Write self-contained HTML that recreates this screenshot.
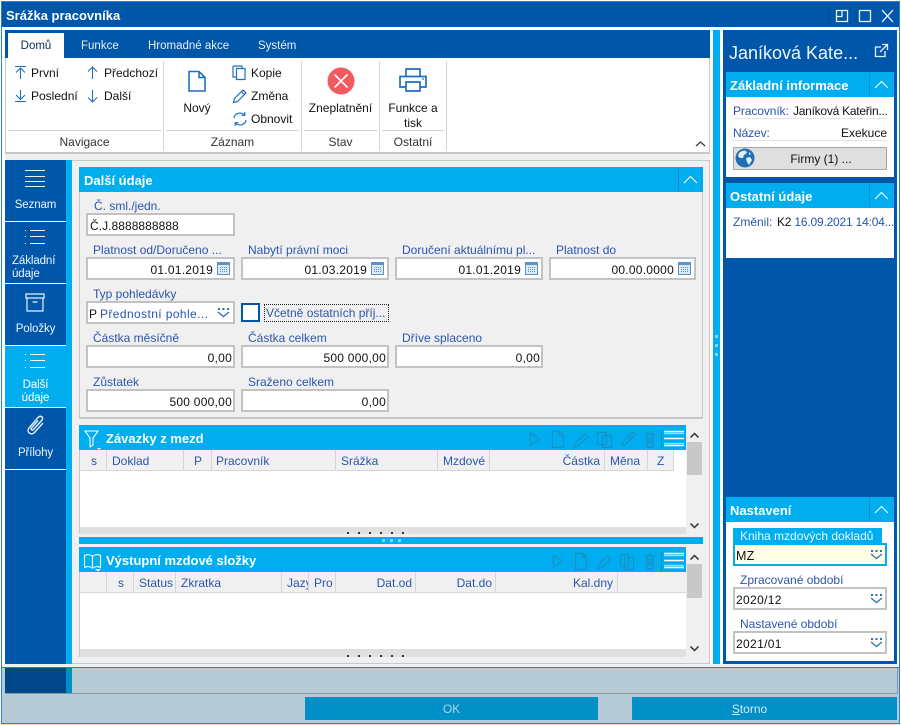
<!DOCTYPE html>
<html lang="cs"><head><meta charset="utf-8"><title>Srážka pracovníka</title>
<style>
html,body{margin:0;padding:0;background:#fff}
body{width:901px;height:725px;position:relative;overflow:hidden;font:12px/14px "Liberation Sans","DejaVu Sans",sans-serif;color:#111}
div,svg{position:absolute;box-sizing:border-box}
.t{white-space:nowrap}
.l{white-space:nowrap;color:#2b55ad}
.h{white-space:nowrap;color:#fff;font-weight:bold;font-size:13px;line-height:16px}
.c{text-align:center}
.r{text-align:right}
.b{background:#00aeef}
.in{background:#fff;border:2px solid #c2c2c2;height:23px}
.v{white-space:nowrap;letter-spacing:.25px}
.nav{color:#eef5ff;text-align:center;left:5px;width:61px;line-height:17px;font-size:11.5px;letter-spacing:-.1px}
.sep{background:#d4d4d4}
.col{background:#d6d6d6;width:1px}
svg{fill:none}
</style></head><body>
<!-- window -->
<div style="left:1px;top:1px;width:899px;height:723px;border:1px solid #2a7fd8;background:#f0f0f0"></div>
<div style="left:2px;top:2px;width:897px;height:25px;background:#0056a8"></div>
<div style="left:2px;top:27px;width:897px;height:637px;background:#fff"></div>
<div class="h" style="left:6px;top:8px">Srážka pracovníka</div>
<div style="left:829px;top:8px;width:1px;height:17px;background:#004a92"></div>
<svg style="left:835px;top:8px" width="64" height="16" stroke="#e8f0fa" stroke-width="1.3">
<path d="M1.500 2.500h11v11h-11zM7 2.500v6H1.500"/><path d="M24.500 2.500h11v11h-11z"/><path d="M47 2l11 12M58 2L47 14"/></svg>

<!-- ribbon -->
<div style="left:5px;top:30px;width:705px;height:124px;background:#fff;border:solid #c8c8c8;border-width:0 1px 2px 1px"></div>
<div style="left:5px;top:30px;width:705px;height:28px;background:#0056a8"></div>
<div style="left:8px;top:33px;width:56px;height:25px;background:#fff"></div>
<div class="t c" style="left:8px;top:39px;width:56px;font-size:11.500px;color:#0c2a55">Domů</div>
<div class="t" style="left:81px;top:39px;color:#e8f1fb;font-size:11.500px">Funkce</div>
<div class="t" style="left:148px;top:39px;color:#e8f1fb;font-size:11.500px">Hromadné akce</div>
<div class="t" style="left:258px;top:39px;color:#e8f1fb;font-size:11.500px">Systém</div>
<div class="sep" style="left:8px;top:130px;width:153px;height:1px"></div>
<div class="sep" style="left:166px;top:130px;width:133px;height:1px"></div>
<div class="sep" style="left:304px;top:130px;width:73px;height:1px"></div>
<div class="sep" style="left:382px;top:130px;width:62px;height:1px"></div>
<div class="sep" style="left:163px;top:61px;width:1px;height:90px"></div>
<div class="sep" style="left:301px;top:61px;width:1px;height:90px"></div>
<div class="sep" style="left:379px;top:61px;width:1px;height:90px"></div>
<div class="sep" style="left:446px;top:61px;width:1px;height:90px"></div>
<svg style="left:14px;top:65px" width="16" height="16" stroke="#1f6fc0" stroke-width="1.1"><path d="M1 1.500h11M6.500 14V3M2 7.500l4.500-4.500 4.500 4.500"/></svg>
<svg style="left:14px;top:88px" width="16" height="16" stroke="#1f6fc0" stroke-width="1.1"><path d="M1 13.500h11M6.500 2v9.500M2 7l4.500 4.500L11 7"/></svg>
<svg style="left:87px;top:65px" width="14" height="16" stroke="#1f6fc0" stroke-width="1.1"><path d="M5.500 14V2M1 6.500L5.500 2 10 6.500"/></svg>
<svg style="left:87px;top:88px" width="14" height="16" stroke="#1f6fc0" stroke-width="1.1"><path d="M5.500 2v12M1 9.500L5.500 14 10 9.500"/></svg>
<div class="t" style="left:31px;top:66px">První</div>
<div class="t" style="left:31px;top:89px">Poslední</div>
<div class="t" style="left:104px;top:66px">Předchozí</div>
<div class="t" style="left:104px;top:89px">Další</div>
<div class="t c" style="left:8px;top:135px;width:153px;color:#333">Navigace</div>
<svg style="left:187px;top:70px" width="20" height="22" stroke="#1f6fc0" stroke-width="1.600"><path d="M2 1.500h10l6 6v13.500H2zM12 1.500v6h6"/></svg>
<div class="t c" style="left:167px;top:101px;width:60px">Nový</div>
<svg style="left:232px;top:65px" width="16" height="16" stroke="#1f6fc0" stroke-width="1.2"><path d="M1 1h9v2M1 1v11h3M4.500 3.500h8.500v11H4.500z"/></svg>
<svg style="left:232px;top:88px" width="16" height="16" stroke="#1f6fc0" stroke-width="1.2"><path d="M1.500 14.500l1-4 8.500-8.500 3 3-8.500 8.500zM9.500 3.500l3 3"/></svg>
<svg style="left:232px;top:111px" width="16" height="16" stroke="#1f6fc0" stroke-width="1.2"><path d="M2 7a6 5.500 0 0 1 10.500-3M14 9a6 5.500 0 0 1-10.500 3M12.800 1v3.300H9.500M3.200 15v-3.300h3.300"/></svg>
<div class="t" style="left:251px;top:66px">Kopie</div>
<div class="t" style="left:251px;top:89px">Změna</div>
<div class="t" style="left:251px;top:112px">Obnovit</div>
<div class="t c" style="left:166px;top:135px;width:133px;color:#333">Záznam</div>
<svg style="left:327px;top:67px" width="28" height="28"><circle cx="14" cy="14" r="13.500" fill="#f15a5f"/><path d="M7.500 7.500l13 13M20.500 7.500l-13 13" stroke="#fff" stroke-width="1.600"/></svg>
<div class="t c" style="left:303px;top:101px;width:75px">Zneplatnění</div>
<div class="t c" style="left:303px;top:135px;width:75px;color:#333">Stav</div>
<svg style="left:399px;top:67px" width="28" height="26" stroke="#1f6fc0" stroke-width="1.700"><path d="M7 9V2h14v7M7 20H1V9.500h26V20h-6M7 15h14v9H7z"/><path d="M23 12h2" stroke-width="1.200"/></svg>
<div class="t c" style="left:381px;top:101px;width:64px;line-height:15px">Funkce a<br>tisk</div>
<div class="t c" style="left:381px;top:135px;width:64px;color:#333">Ostatní</div>
<svg style="left:695px;top:140px" width="11" height="8" stroke="#333" stroke-width="1.200"><path d="M1 6l4.500-4L10 6"/></svg>

<!-- main -->
<div style="left:5px;top:154px;width:705px;height:6px;background:#f0f0f0"></div>
<div style="left:72px;top:160px;width:638px;height:504px;background:#f0f0f0;border:solid #c8c8c8;border-width:1px 1px 1px 0"></div>
<div style="left:5px;top:160px;width:61px;height:504px;background:#0056a8"></div>
<div style="left:66px;top:160px;width:6px;height:504px;background:#00aeef"></div>
<div style="left:5px;top:346px;width:61px;height:61px;background:#00aeef"></div>
<div style="left:5px;top:221px;width:61px;height:1px;background:#fff"></div>
<div style="left:5px;top:283px;width:61px;height:1px;background:#fff"></div>
<div style="left:5px;top:345px;width:61px;height:1px;background:#fff"></div>
<div style="left:5px;top:407px;width:61px;height:1px;background:#fff"></div>
<div style="left:5px;top:469px;width:61px;height:1px;background:#fff"></div>
<svg style="left:24px;top:169px" width="22" height="18" stroke="#e8f1fb" stroke-width="1"><path d="M1 1.500h20M1 7.500h20M1 12.500h20M1 17.500h20"/></svg>
<div class="nav" style="top:197px">Seznam</div>
<svg style="left:24px;top:229px" width="22" height="16" stroke="#e8f1fb"><path d="M6 1.500h15M6 7.500h15M6 14.500h15"/><path d="M1 1.500h2M1 7.500h2M1 14.500h2" stroke-dasharray="1 1"/></svg>
<div class="nav" style="top:255px;left:9px;width:52px;text-align:left;line-height:13px;padding-left:3px">Základní<br>údaje</div>
<svg style="left:25px;top:293px" width="20" height="19" stroke="#e8f1fb" stroke-width="1.200"><path d="M1 1h18v4H1zM2 5v13h16V5M7.500 9h5"/></svg>
<div class="nav" style="top:321px">Položky</div>
<svg style="left:24px;top:353px" width="22" height="16" stroke="#fff"><path d="M6 1.500h15M6 7.500h15M6 14.500h15"/><path d="M1 1.500h2M1 7.500h2M1 14.500h2" stroke-dasharray="1 1"/></svg>
<div class="nav" style="top:379px;color:#fff;line-height:13px;left:5px">Další<br>údaje</div>
<svg style="left:26px;top:415px" width="20" height="22" stroke="#dfeaf7" stroke-width="1.500"><path d="M17 8l-8.500 9.500c-3.500 3.500-8.500-.5-5.500-4.500l9-10.500c2.500-2.500 6-.5 4 2.500L7.500 14.500c-1.500 1.500-3-.5-2-1.500L12 5.500"/></svg>
<div class="nav" style="top:445px">Přílohy</div>

<!-- detail panel -->
<div style="left:79px;top:167px;width:624px;height:252px;border:solid #c8c8c8;border-width:0 1px 2px 1px;background:#f0f0f0"></div>
<div class="b" style="left:79px;top:167px;width:624px;height:25px"></div>
<div class="h" style="left:84px;top:173px">Další údaje</div>
<div style="left:678px;top:168px;width:1px;height:23px;background:#0a8fcb"></div>
<svg style="left:683px;top:175px" width="15" height="9" stroke="#e8f7ff" stroke-width="1.200"><path d="M1 8l6.500-6.500L14 8"/></svg>

<div class="l" style="left:94px;top:199px">Č. sml./jedn.</div>
<div class="in" style="left:86px;top:213px;width:149px"></div>
<div class="v" style="left:90px;top:219px;letter-spacing:.05px">Č.J.8888888888</div>

<div class="l" style="left:93px;top:243px">Platnost od/Doručeno ...</div>
<div class="l" style="left:248px;top:243px">Nabytí právní moci</div>
<div class="l" style="left:402px;top:243px">Doručení aktuálnímu pl...</div>
<div class="l" style="left:556px;top:243px">Platnost do</div>
<div class="in" style="left:86px;top:257px;width:149px"></div>
<div class="in" style="left:241px;top:257px;width:148px"></div>
<div class="in" style="left:395px;top:257px;width:148px"></div>
<div class="in" style="left:549px;top:257px;width:147px"></div>
<div class="v r" style="left:100px;top:263px;width:113px">01.01.2019</div>
<div class="v r" style="left:254px;top:263px;width:113px">01.03.2019</div>
<div class="v r" style="left:408px;top:263px;width:113px">01.01.2019</div>
<div class="v r" style="left:561px;top:263px;width:113px">00.00.0000</div>
<svg style="left:217px;top:261px" width="14" height="14"><path d="M.5 1.500h12v12H.5z" stroke="#5b93c9" fill="#dce9f6"/><path d="M1 1.500h11v2.500H1z" fill="#5b93c9"/><path d="M3 6.500h7M3 8.500h7M3 10.500h7" stroke="#5b93c9" stroke-dasharray="1 1"/></svg>
<svg style="left:371px;top:261px" width="14" height="14"><path d="M.5 1.500h12v12H.5z" stroke="#5b93c9" fill="#dce9f6"/><path d="M1 1.500h11v2.500H1z" fill="#5b93c9"/><path d="M3 6.500h7M3 8.500h7M3 10.500h7" stroke="#5b93c9" stroke-dasharray="1 1"/></svg>
<svg style="left:525px;top:261px" width="14" height="14"><path d="M.5 1.500h12v12H.5z" stroke="#5b93c9" fill="#dce9f6"/><path d="M1 1.500h11v2.500H1z" fill="#5b93c9"/><path d="M3 6.500h7M3 8.500h7M3 10.500h7" stroke="#5b93c9" stroke-dasharray="1 1"/></svg>
<svg style="left:678px;top:261px" width="14" height="14"><path d="M.5 1.500h12v12H.5z" stroke="#5b93c9" fill="#dce9f6"/><path d="M1 1.500h11v2.500H1z" fill="#5b93c9"/><path d="M3 6.500h7M3 8.500h7M3 10.500h7" stroke="#5b93c9" stroke-dasharray="1 1"/></svg>

<div class="l" style="left:93px;top:287px">Typ pohledávky</div>
<div class="in" style="left:86px;top:301px;width:149px"></div>
<div class="v" style="left:89px;top:307px">P</div>
<div class="v" style="left:100px;top:307px;color:#2b55ad;letter-spacing:.4px">Přednostní pohle...</div>
<svg style="left:217px;top:307px" width="13" height="11"><path d="M1 1h2v2H1zM5.500 1h2v2h-2zM10 1h2v2h-2z" fill="#2f6db5"/><path d="M1 5l5.500 4.500L12 5" stroke="#2f6db5" stroke-width="1.300"/></svg>
<div style="left:241px;top:303px;width:19px;height:19px;background:#fff;border:2px solid #0056a8"></div>
<div style="left:264px;top:304px;width:125px;height:18px;border:1px dotted #222"></div>
<div class="l" style="left:266px;top:306px">Včetně ostatních příj...</div>

<div class="l" style="left:93px;top:331px">Částka měsíčně</div>
<div class="l" style="left:248px;top:331px">Částka celkem</div>
<div class="l" style="left:402px;top:331px">Dříve splaceno</div>
<div class="in" style="left:86px;top:345px;width:149px"></div>
<div class="in" style="left:241px;top:345px;width:148px"></div>
<div class="in" style="left:395px;top:345px;width:148px"></div>
<div class="v r" style="left:100px;top:351px;width:132px">0,00</div>
<div class="v r" style="left:254px;top:351px;width:132px">500 000,00</div>
<div class="v r" style="left:408px;top:351px;width:132px">0,00</div>
<div class="l" style="left:93px;top:375px">Zůstatek</div>
<div class="l" style="left:248px;top:375px">Sraženo celkem</div>
<div class="in" style="left:86px;top:389px;width:149px"></div>
<div class="in" style="left:241px;top:389px;width:148px"></div>
<div class="v r" style="left:100px;top:395px;width:132px">500 000,00</div>
<div class="v r" style="left:254px;top:395px;width:132px">0,00</div>

<!-- grid 1 -->
<div style="left:79px;top:450px;width:607px;height:84px;background:#fff;border-left:1px solid #c8c8c8"></div>
<div style="left:80px;top:450px;width:593px;height:21px;background:#f0f0f0;border-bottom:1px solid #d6d6d6"></div>
<div class="b" style="left:79px;top:425px;width:607px;height:25px"></div>
<div style="left:80px;top:527px;width:606px;height:7px;background:#e0e0e0;overflow:hidden"></div>
<div style="left:347px;top:532px;width:60px;height:2px;background:repeating-linear-gradient(90deg,#333 0 2px,transparent 2px 11px)"></div>
<svg style="left:84px;top:430px" width="20" height="20" stroke="#fff" stroke-width="1.100"><path d="M1 1h13L9 8v7l-3 2V8z"/><path d="M13 18h4l-2 2z" fill="#fff" stroke="none"/></svg>
<div class="h" style="left:106px;top:431px">Závazky z mezd</div>
<div class="col" style="left:106px;top:450px;height:21px"></div><div class="col" style="left:183px;top:450px;height:21px"></div><div class="col" style="left:211px;top:450px;height:21px"></div><div class="col" style="left:335px;top:450px;height:21px"></div><div class="col" style="left:437px;top:450px;height:21px"></div><div class="col" style="left:489px;top:450px;height:21px"></div><div class="col" style="left:604px;top:450px;height:21px"></div><div class="col" style="left:647px;top:450px;height:21px"></div><div class="col" style="left:673px;top:450px;height:21px"></div>
<div class="l" style="left:91px;top:454px">s</div>
<div class="l" style="left:112px;top:454px">Doklad</div>
<div class="l" style="left:194px;top:454px">P</div>
<div class="l" style="left:216px;top:454px">Pracovník</div>
<div class="l" style="left:341px;top:454px">Srážka</div>
<div class="l" style="left:443px;top:454px;width:46px;overflow:hidden">Mzdové dok</div>
<div class="l r" style="left:540px;top:454px;width:60px">Částka</div>
<div class="l" style="left:610px;top:454px">Měna</div>
<div class="l" style="left:657px;top:454px">Z</div>
<svg style="left:525px;top:429px" width="135" height="20" stroke="#1a8fc4" stroke-width="1.200"><path d="M5.500 4l9 6-9 6z"/><path d="M27.500 2.500h7l4 4v12h-11zM34.500 2.500v4h4"/><path d="M49.500 18l1-4 9-9 3 3-9 9z"/><path d="M72.500 3.500h9v12h-9zM77.500 6.500h9v12h-9z"/><path d="M108 7l-8 9c-2 2-4-1-2-3l9-9c2-2 4 1 2 3l-7 7"/><path d="M120 5h10M122 5v13h6V5M124 3h2M124 8v7M126 8v7"/></svg>
<div style="left:661px;top:430px;width:1px;height:20px;background:#0a8fcb"></div>
<svg style="left:664px;top:430px" width="20" height="17"><path d="M0 1.500h20M0 8.500h20M0 15.500h20" stroke="#fff" stroke-width="1.500"/><path d="M0 3.500h20M0 13.500h20" stroke="#8fdcff" stroke-width="1.500"/></svg>
<div style="left:687px;top:442px;width:15px;height:33px;background:#c8c8c8"></div>
<svg style="left:689px;top:431px" width="11" height="8" stroke="#444" stroke-width="1.600"><path d="M1.500 6.500l4-4 4 4"/></svg>
<svg style="left:689px;top:522px" width="11" height="8" stroke="#444" stroke-width="1.600"><path d="M1.500 1.500l4 4 4-4"/></svg>

<!-- splitter -->
<div class="b" style="left:79px;top:537px;width:624px;height:7px"></div>
<div style="left:382px;top:539px;width:19px;height:3px;background:repeating-linear-gradient(90deg,#7fd6f7 0 3px,transparent 3px 8px)"></div>

<!-- grid 2 -->
<div style="left:79px;top:572px;width:607px;height:85px;background:#fff;border-left:1px solid #c8c8c8"></div>
<div style="left:80px;top:572px;width:606px;height:21px;background:#f0f0f0;border-bottom:1px solid #d6d6d6"></div>
<div class="b" style="left:79px;top:547px;width:607px;height:25px"></div>
<div style="left:80px;top:649px;width:606px;height:8px;background:#e0e0e0"></div>
<div style="left:347px;top:655px;width:60px;height:2px;background:repeating-linear-gradient(90deg,#333 0 2px,transparent 2px 11px)"></div>
<svg style="left:84px;top:553px" width="18" height="19" stroke="#fff" stroke-width="1.100"><path d="M.5 2.500c3-1.500 5-1 8 .5v12c-3-1.500-5-2-8-.5zM8.500 3c3-1.500 5-2 8-.5v12c-3-1.500-5-1-8 .5"/><path d="M11 16h6l-3 2.500z" fill="#fff" stroke="none"/></svg>
<div class="h" style="left:106px;top:553px">Výstupní mzdové složky</div>
<div class="col" style="left:106px;top:572px;height:21px"></div><div class="col" style="left:133px;top:572px;height:21px"></div><div class="col" style="left:175px;top:572px;height:21px"></div><div class="col" style="left:281px;top:572px;height:21px"></div><div class="col" style="left:308px;top:572px;height:21px"></div><div class="col" style="left:335px;top:572px;height:21px"></div><div class="col" style="left:415px;top:572px;height:21px"></div><div class="col" style="left:495px;top:572px;height:21px"></div><div class="col" style="left:617px;top:572px;height:21px"></div>
<div class="l" style="left:118px;top:576px">s</div>
<div class="l" style="left:139px;top:576px">Status</div>
<div class="l" style="left:181px;top:576px">Zkratka</div>
<div class="l" style="left:287px;top:576px;width:21px;overflow:hidden">Jazyk</div>
<div class="l" style="left:314px;top:576px;width:21px;overflow:hidden">Pro</div>
<div class="l r" style="left:350px;top:576px;width:62px">Dat.od</div>
<div class="l r" style="left:430px;top:576px;width:62px">Dat.do</div>
<div class="l r" style="left:540px;top:576px;width:73px">Kal.dny</div>
<svg style="left:550px;top:551px" width="110" height="20" stroke="#1a8fc4" stroke-width="1.200"><path d="M3.500 4l9 6-9 6z"/><path d="M25.500 2.500h7l4 4v12h-11zM32.500 2.500v4h4"/><path d="M47.500 18l1-4 9-9 3 3-9 9z"/><path d="M70.500 3.500h8v12h-8zM74.500 6.500h9v12h-9z"/><path d="M95 5h10M97 5v13h6V5M99 3h2M99 8v7M101 8v7"/></svg>
<div style="left:661px;top:552px;width:1px;height:20px;background:#0a8fcb"></div>
<svg style="left:664px;top:552px" width="20" height="17"><path d="M0 1.500h20M0 8.500h20M0 15.500h20" stroke="#fff" stroke-width="1.500"/><path d="M0 3.500h20M0 13.500h20" stroke="#8fdcff" stroke-width="1.500"/></svg>
<div style="left:687px;top:564px;width:15px;height:34px;background:#c8c8c8"></div>
<svg style="left:689px;top:553px" width="11" height="8" stroke="#444" stroke-width="1.600"><path d="M1.500 6.500l4-4 4 4"/></svg>
<svg style="left:689px;top:645px" width="11" height="8" stroke="#444" stroke-width="1.600"><path d="M1.500 1.500l4 4 4-4"/></svg>

<!-- vertical splitter + right pane -->
<div class="b" style="left:713px;top:30px;width:7px;height:634px"></div>
<div style="left:715px;top:335px;width:3px;height:21px;background:repeating-linear-gradient(180deg,#7fd6f7 0 3px,transparent 3px 9px)"></div>
<div style="left:723px;top:30px;width:174px;height:634px;background:#0056a8"></div>
<div class="t" style="left:729px;top:42px;color:#eef5ff;font-size:18px;line-height:22px">Janíková Kate...</div>
<svg style="left:874px;top:43px" width="15" height="15" stroke="#e8f1fb" stroke-width="1.300"><path d="M11 8v5.500H1.500V4H7M8 1.500h5.500V7M13.500 1.500L6 9"/></svg>

<div style="left:726px;top:72px;width:168px;height:105px;background:#fff"></div>
<div class="b" style="left:726px;top:72px;width:168px;height:25px"></div>
<div class="h" style="left:730px;top:78px">Základní informace</div>
<div style="left:869px;top:73px;width:1px;height:23px;background:#0a8fcb"></div>
<svg style="left:874px;top:80px" width="15" height="9" stroke="#e8f7ff" stroke-width="1.200"><path d="M1 8l6.500-6.500L14 8"/></svg>
<div class="l" style="left:733px;top:104px;letter-spacing:-.1px">Pracovník:</div>
<div class="v" style="left:793px;top:104px;letter-spacing:-.25px">Janíková Kateřin...</div>
<div style="left:733px;top:118px;width:154px;height:1px;background:#e4e4e4"></div>
<div class="l" style="left:733px;top:126px;letter-spacing:-.1px">Název:</div>
<div class="v r" style="left:800px;top:126px;width:87px;letter-spacing:0">Exekuce</div>
<div style="left:733px;top:140px;width:154px;height:1px;background:#e4e4e4"></div>
<div style="left:733px;top:147px;width:154px;height:23px;background:#dfdfdf;border:1px solid #a9a9a9"></div>
<svg style="left:735px;top:148px" width="20" height="20"><circle cx="10" cy="10" r="9.500" fill="#1f6fb8"/><path d="M4 5c2-2 5-3 7-2l1 2-3 2-1 3-3 0-2-2zM11 10l4-1 2 3-3 5-2-3zM14 4l2 2-2 1z" fill="#e4eef8"/></svg>
<div class="t c" style="left:765px;top:152px;width:112px">Firmy (1) ...</div>

<div style="left:726px;top:183px;width:168px;height:75px;background:#fff"></div>
<div class="b" style="left:726px;top:183px;width:168px;height:25px"></div>
<div class="h" style="left:730px;top:189px">Ostatní údaje</div>
<div style="left:869px;top:184px;width:1px;height:23px;background:#0a8fcb"></div>
<svg style="left:874px;top:191px" width="15" height="9" stroke="#e8f7ff" stroke-width="1.200"><path d="M1 8l6.500-6.500L14 8"/></svg>
<div class="l" style="left:733px;top:215px">Změnil:</div>
<div class="v" style="left:777px;top:215px;letter-spacing:-.2px">K2 <span style="color:#2b55ad">16.09.2021 14:04...</span></div>

<div style="left:726px;top:497px;width:168px;height:164px;background:#fff"></div>
<div class="b" style="left:726px;top:497px;width:168px;height:25px"></div>
<div class="h" style="left:730px;top:503px">Nastavení</div>
<div style="left:869px;top:498px;width:1px;height:23px;background:#0a8fcb"></div>
<svg style="left:874px;top:505px" width="15" height="9" stroke="#e8f7ff" stroke-width="1.200"><path d="M1 8l6.500-6.500L14 8"/></svg>
<div style="left:733px;top:528px;width:149px;height:15px;background:#00aeef"></div>
<div class="t" style="left:740px;top:529px;color:#eefaff">Kniha mzdových dokladů</div>
<div style="left:733px;top:543px;width:154px;height:23px;background:#ffffe6;border:2px solid #00aeef"></div>
<div class="v" style="left:736px;top:549px;font-size:12.500px">MZ</div>
<div class="l" style="left:740px;top:573px">Zpracované období</div>
<div class="in" style="left:733px;top:587px;width:154px"></div>
<div class="v" style="left:736px;top:593px;letter-spacing:.35px">2020/12</div>
<div class="l" style="left:740px;top:617px">Nastavené období</div>
<div class="in" style="left:733px;top:631px;width:154px"></div>
<div class="v" style="left:736px;top:637px;letter-spacing:.35px">2021/01</div>
<svg style="left:870px;top:549px" width="13" height="11"><path d="M1 1h2v2H1zM5.500 1h2v2h-2zM10 1h2v2h-2z" fill="#2f6db5"/><path d="M1 5l5.500 4.500L12 5" stroke="#2f6db5" stroke-width="1.300"/></svg>
<svg style="left:870px;top:593px" width="13" height="11"><path d="M1 1h2v2H1zM5.500 1h2v2h-2zM10 1h2v2h-2z" fill="#2f6db5"/><path d="M1 5l5.500 4.500L12 5" stroke="#2f6db5" stroke-width="1.300"/></svg>
<svg style="left:870px;top:637px" width="13" height="11"><path d="M1 1h2v2H1zM5.500 1h2v2h-2zM10 1h2v2h-2z" fill="#2f6db5"/><path d="M1 5l5.500 4.500L12 5" stroke="#2f6db5" stroke-width="1.300"/></svg>

<!-- bottom bar -->
<div style="left:2px;top:664px;width:897px;height:3px;background:#f0f0f0"></div>
<div style="left:2px;top:667px;width:897px;height:56px;background:#b6cbd6;border-top:1px solid #2a7fd8"></div>
<div style="left:5px;top:668px;width:61px;height:26px;background:#00468b"></div>
<div style="left:66px;top:668px;width:6px;height:26px;background:#0090c8"></div>
<div style="left:5px;top:693px;width:892px;height:1px;background:#8a959c"></div>
<div style="left:897px;top:668px;width:1px;height:26px;background:#8a959c"></div>
<div style="left:305px;top:697px;width:293px;height:23px;background:#0090c8"></div>
<div style="left:632px;top:697px;width:265px;height:23px;background:#0090c8"></div>
<div class="t c" style="left:305px;top:702px;width:293px;color:#a9d4e8">OK</div>
<div class="t c" style="left:632px;top:702px;width:235px;color:#d3e9f3"><u>S</u>torno</div>
<div style="left:0;top:724px;width:901px;height:1px;background:#e6e2d0"></div>
</body></html>
